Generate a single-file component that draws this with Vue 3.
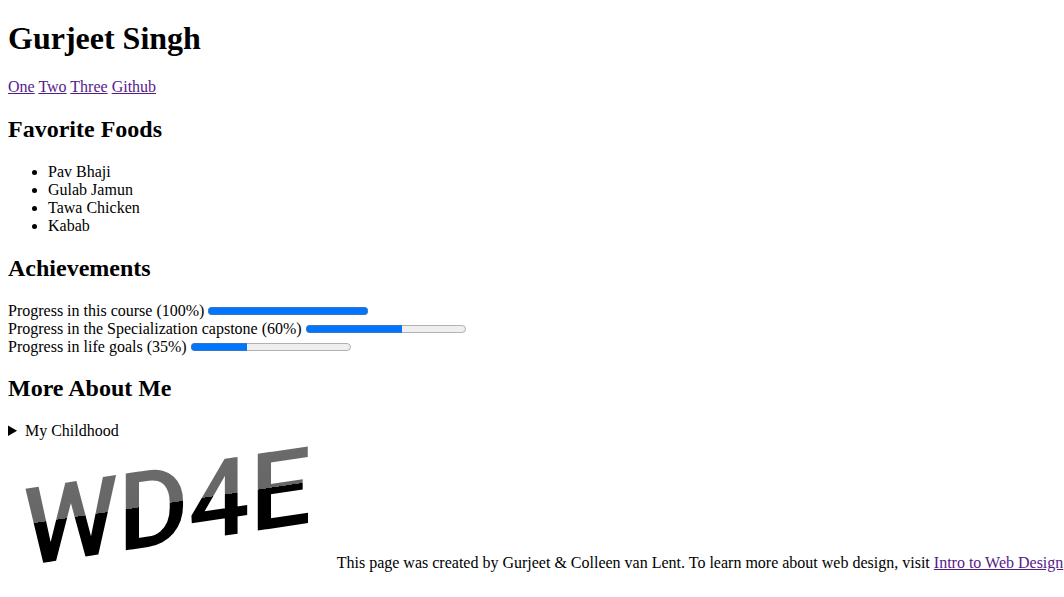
<script setup>
const links = ['One', 'Two', 'Three', 'Github']
const foods = ['Pav Bhaji', 'Gulab Jamun', 'Tawa Chicken', 'Kabab']
const goals = [
  { id: 'course', label: 'Progress in this course (100%)', value: 100 },
  { id: 'capstone', label: 'Progress in the Specialization capstone (60%)', value: 60 },
  { id: 'life', label: 'Progress in life goals (35%)', value: 35 },
]
</script>

<template>
  <div class="page">
    <header>
      <h1>Gurjeet Singh</h1>
      <nav>
        <template v-for="link in links" :key="link"><a href="#">{{ link }}</a>{{ ' ' }}</template>
      </nav>
    </header>
    <main>
      <section>
        <h2>Favorite Foods</h2>
        <ul>
          <li v-for="food in foods" :key="food">{{ food }}</li>
        </ul>
      </section>
      <section>
        <h2>Achievements</h2>
        <div v-for="goal in goals" :key="goal.id" class="goal">
          <label :for="goal.id">{{ goal.label }}</label>{{ ' ' }}<progress :id="goal.id" :value="goal.value" max="100"></progress>
        </div>
      </section>
      <section>
        <h2>More About Me</h2>
        <details>
          <summary>My Childhood</summary>
        </details>
      </section>
    </main>
    <footer>
      <svg class="logo" width="325" height="128" viewBox="0 0 325 128" role="img" aria-label="WD4E">
        <defs>
          <linearGradient id="tone" gradientUnits="userSpaceOnUse" x1="0" y1="47" x2="0" y2="127">
            <stop offset="0" stop-color="#6b6b6b" />
            <stop offset="0.5" stop-color="#666666" />
            <stop offset="0.5" stop-color="#000000" />
            <stop offset="1" stop-color="#000000" />
          </linearGradient>
        </defs>
        <text class="mark" x="15" y="128" transform="skewY(-8.5)" fill="url(#tone)">WD4E</text>
      </svg>
      This page was created by Gurjeet &amp; Colleen van Lent. To learn more about web design, visit <a href="#">Intro to Web Design</a>
    </footer>
  </div>
</template>

<style>
body {
  margin: 0;
  background: #ffffff;
}
</style>

<style scoped>
.page {
  padding: 0 8px;
  color: #000000;
  font-family: "Liberation Serif", "Times New Roman", serif;
  font-size: 16px;
  line-height: 18px;
}
h1 {
  margin: 20px 0 22px;
  font-size: 32px;
  line-height: 36px;
}
nav {
  margin-bottom: 20px;
}
h2 {
  margin: 19px 0 20px;
  font-size: 24px;
  line-height: 27px;
}
a {
  color: #551a8b;
  text-decoration: underline;
}
ul {
  margin: 20px 0;
  padding-left: 40px;
}
footer {
  white-space: nowrap;
}
.logo {
  overflow: visible;
}
.mark {
  font-family: Roboto, sans-serif;
  font-size: 108px;
  font-weight: 500;
}
</style>
